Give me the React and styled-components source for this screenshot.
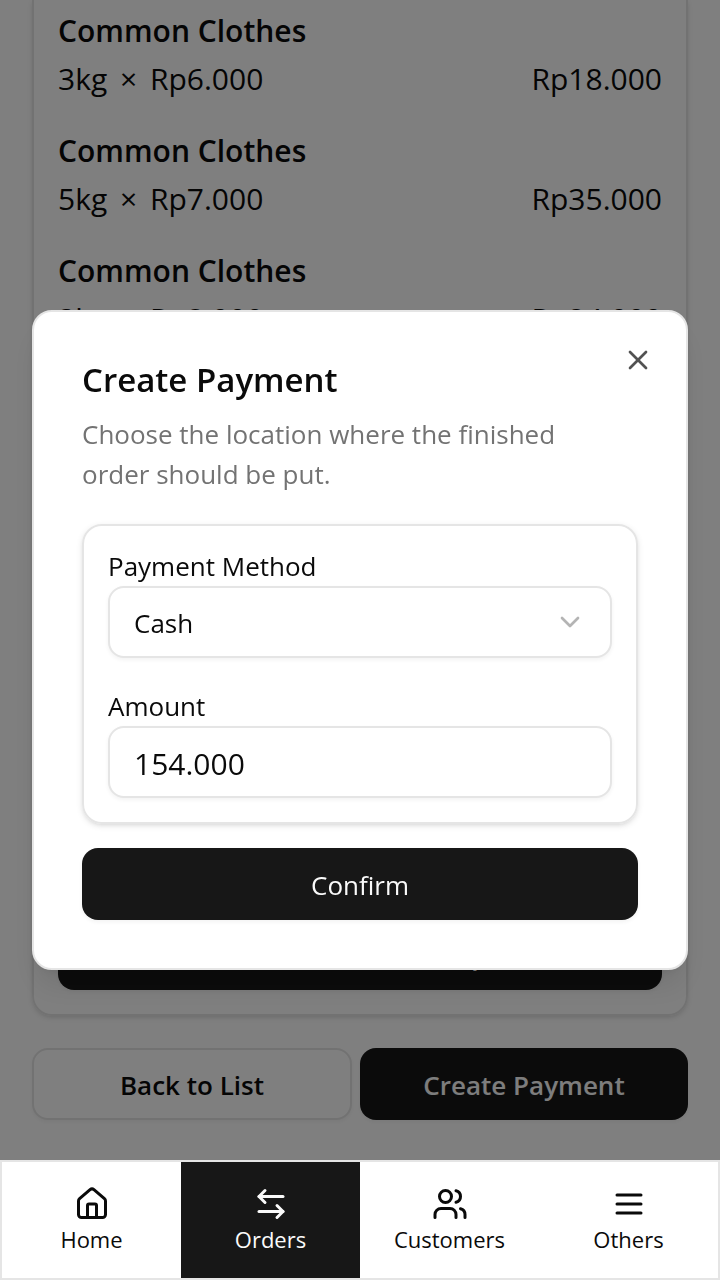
import React from "react";
import styled, { createGlobalStyle, css } from "styled-components";
import { ArrowLeftRight, ChevronDown, House, Users, X } from "lucide-react";

const GlobalStyle = createGlobalStyle`
  *, *::before, *::after { box-sizing: border-box; }
  body {
    margin: 0;
    background: #ffffff;
    color: #0a0a0a;
    font-family: "Open Sans", "Noto Sans", sans-serif;
    font-size: 30px;
    line-height: 48px;
  }
  h2, h3, p, ul { margin: 0; padding: 0; }
  button, input, select { font: inherit; color: inherit; margin: 0; }
`;

const Shell = styled.div`
  min-height: 100vh;
  display: flex;
  flex-direction: column;
`;

const Page = styled.main`
  flex: 1;
  display: flex;
  flex-direction: column;
  gap: 32px;
  padding: 0 32px 40px;
`;

const OrderCard = styled.section`
  flex: 1;
  display: flex;
  flex-direction: column;
  justify-content: space-between;
  gap: 24px;
  padding: 7px 24px 24px;
  border: 2px solid #e5e5e5;
  border-top: 0;
  border-radius: 0 0 20px 20px;
  box-shadow: 0 2px 6px rgba(0, 0, 0, 0.1), 0 2px 4px -2px rgba(0, 0, 0, 0.1);
`;

const ItemList = styled.ul`
  display: flex;
  flex-direction: column;
  gap: 24px;
  list-style: none;
`;

const ItemName = styled.h3`
  font-size: 30px;
  font-weight: 600;
  line-height: 48px;
`;

const ItemLine = styled.p`
  display: flex;
  justify-content: space-between;
`;

const Times = styled.span`
  margin: 0 5px;
`;

const Button = styled.button`
  width: 100%;
  height: 72px;
  padding: 2px 32px 0;
  border: 0;
  border-radius: 16px;
  background: #171717;
  color: #fafafa;
  font-size: 26px;
  font-weight: ${(p) => (p.$strong ? 600 : 400)};
  line-height: 40px;
  box-shadow: 0 2px 4px rgba(0, 0, 0, 0.05);
  cursor: pointer;
  ${(p) =>
    p.$outline &&
    css`
      border: 2px solid #e5e5e5;
      background: #ffffff;
      color: #0a0a0a;
    `}
`;

const Actions = styled.div`
  display: grid;
  grid-template-columns: 40fr 41fr;
  gap: 8px;
`;

const NavBar = styled.nav`
  position: sticky;
  bottom: 0;
  z-index: 20;
  display: grid;
  grid-template-columns: repeat(4, 1fr);
  height: 120px;
  border: 2px solid #e5e5e5;
  background: #ffffff;
`;

const NavLink = styled.a`
  display: flex;
  flex-direction: column;
  align-items: center;
  justify-content: center;
  padding-top: 2px;
  background: ${(p) => (p.$active ? "#171717" : "transparent")};
  color: ${(p) => (p.$active ? "#fafafa" : "#0a0a0a")};
  font-size: 22px;
  line-height: 34px;
  text-decoration: none;
`;

const Overlay = styled.div`
  position: fixed;
  inset: 0;
  z-index: 10;
  display: flex;
  align-items: center;
  justify-content: center;
  padding: 32px;
  background: rgba(0, 0, 0, 0.5);
`;

const Dialog = styled.div`
  position: relative;
  width: 100%;
  max-width: 1024px;
  display: flex;
  flex-direction: column;
  gap: 30px;
  padding: 48px;
  border: 2px solid #e5e5e5;
  border-radius: 20px;
  background: #ffffff;
  box-shadow: 0 20px 30px -6px rgba(0, 0, 0, 0.1), 0 8px 12px -8px rgba(0, 0, 0, 0.1);
`;

const DialogHeader = styled.header`
  display: flex;
  flex-direction: column;
  gap: 16px;
  padding: 2px 32px 0 0;
`;

const DialogTitle = styled.h2`
  font-size: 33px;
  font-weight: 600;
  line-height: 36px;
`;

const DialogText = styled.p`
  color: #737373;
  font-size: 26px;
  line-height: 40px;
`;

const CloseButton = styled.button`
  position: absolute;
  top: 32px;
  right: 32px;
  display: flex;
  padding: 0;
  border: 0;
  background: none;
  opacity: 0.7;
  cursor: pointer;
`;

const Form = styled.form`
  display: flex;
  flex-direction: column;
  gap: 24px;
`;

const FieldCard = styled.div`
  display: flex;
  flex-direction: column;
  gap: 32px;
  padding: 24px;
  border: 2px solid #e5e5e5;
  border-radius: 20px;
  box-shadow: 0 2px 6px rgba(0, 0, 0, 0.1), 0 2px 4px -2px rgba(0, 0, 0, 0.1);
`;

const Field = styled.div`
  display: flex;
  flex-direction: column;
  gap: 4px;
`;

const Label = styled.label`
  font-size: 26px;
  line-height: 32px;
`;

const controlStyles = css`
  width: 100%;
  height: 72px;
  padding: 2px 24px 0;
  border: 2px solid #e5e5e5;
  border-radius: 16px;
  outline: 0;
  background: #ffffff;
  box-shadow: 0 2px 4px rgba(0, 0, 0, 0.05);
`;

const TextInput = styled.input`
  ${controlStyles}
`;

const Select = styled.select`
  ${controlStyles}
  appearance: none;
  font-size: 26px;
`;

const SelectWrap = styled.div`
  position: relative;
  display: flex;

  svg {
    position: absolute;
    top: 20px;
    right: 26px;
    opacity: 0.3;
    pointer-events: none;
  }
`;

function MenuIcon() {
  return (
    <svg width="36" height="36" viewBox="0 0 24 24" fill="none" stroke="currentColor" strokeWidth="2" strokeLinecap="round" aria-hidden="true">
      <path d="M4 6h16M4 12h16M4 18h16" />
    </svg>
  );
}

const items = [
  { id: 1, name: "Common Clothes", amount: "3kg", price: "Rp6.000", total: "Rp18.000" },
  { id: 2, name: "Common Clothes", amount: "5kg", price: "Rp7.000", total: "Rp35.000" },
  { id: 3, name: "Common Clothes", amount: "3kg", price: "Rp8.000", total: "Rp24.000" },
];

const links = [
  { label: "Home", icon: <House size={36} /> },
  { label: "Orders", icon: <ArrowLeftRight size={36} />, active: true },
  { label: "Customers", icon: <Users size={36} /> },
  { label: "Others", icon: <MenuIcon /> },
];

export default function App() {
  return (
    <>
      <GlobalStyle />
      <Shell>
        <Page>
          <OrderCard>
            <ItemList>
              {items.map((item) => (
                <li key={item.id}>
                  <ItemName>{item.name}</ItemName>
                  <ItemLine>
                    <span>
                      {item.amount} <Times>×</Times> {item.price}
                    </span>
                    <span>{item.total}</span>
                  </ItemLine>
                </li>
              ))}
            </ItemList>
            <Button type="button" $strong>Mark it as Picked Up</Button>
          </OrderCard>
          <Actions>
            <Button type="button" $strong $outline>Back to List</Button>
            <Button type="button" $strong>Create Payment</Button>
          </Actions>
        </Page>
        <NavBar>
          {links.map((link) => (
            <NavLink key={link.label} href={`#${link.label.toLowerCase()}`} $active={link.active}>
              {link.icon}
              <span>{link.label}</span>
            </NavLink>
          ))}
        </NavBar>
      </Shell>
      <Overlay>
        <Dialog role="dialog" aria-modal="true" aria-labelledby="payment-title">
          <DialogHeader>
            <DialogTitle id="payment-title">Create Payment</DialogTitle>
            <DialogText>Choose the location where the finished order should be put.</DialogText>
          </DialogHeader>
          <Form onSubmit={(e) => e.preventDefault()}>
            <FieldCard>
              <Field>
                <Label htmlFor="method">Payment Method</Label>
                <SelectWrap>
                  <Select id="method" defaultValue="cash">
                    <option value="cash">Cash</option>
                  </Select>
                  <ChevronDown size={32} />
                </SelectWrap>
              </Field>
              <Field>
                <Label htmlFor="amount">Amount</Label>
                <TextInput id="amount" inputMode="numeric" defaultValue="154.000" />
              </Field>
            </FieldCard>
            <Button type="submit">Confirm</Button>
          </Form>
          <CloseButton type="button" aria-label="Close">
            <X size={32} />
          </CloseButton>
        </Dialog>
      </Overlay>
    </>
  );
}
